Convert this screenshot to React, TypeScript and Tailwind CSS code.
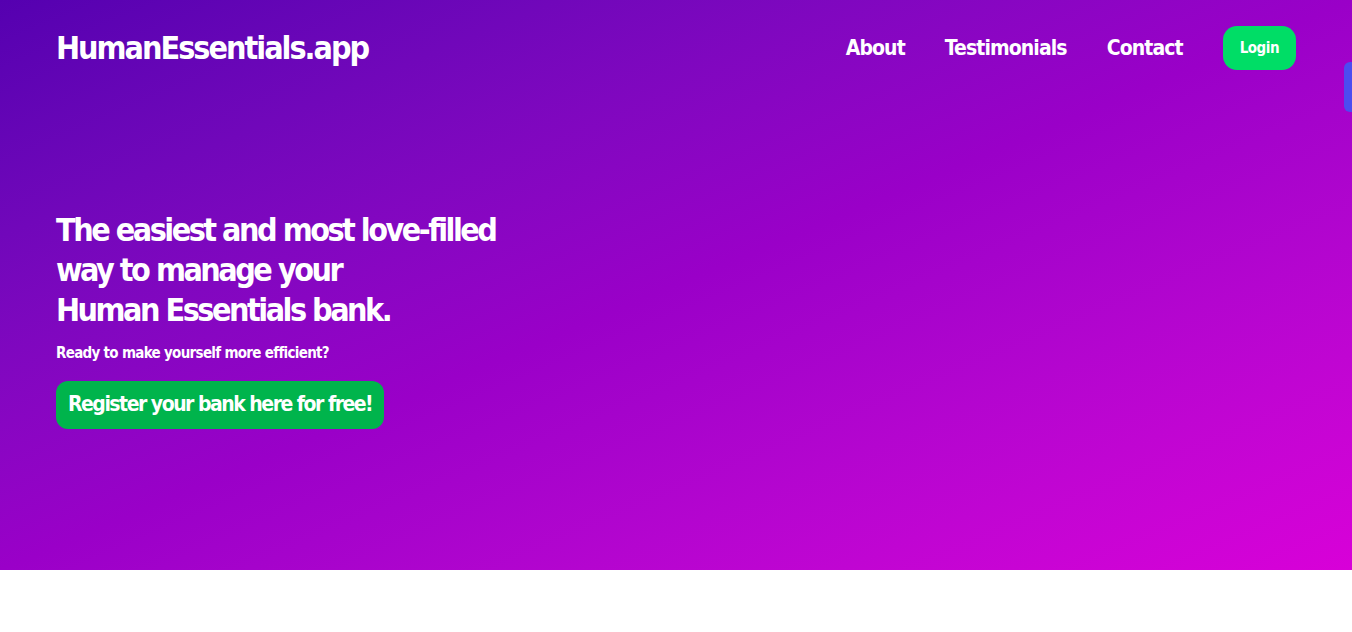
import React from 'react';

const font = { fontFamily: '"DejaVu Sans Condensed", "DejaVu Sans", sans-serif' };

export default function App() {
  return (
    <div className="min-h-screen w-full bg-white" style={font}>
      <header className="relative h-[570px] w-full bg-linear-to-br from-[#5500b0] via-[#9a00c8] to-[#d800d8] text-white">
        <nav className="flex items-center justify-between pl-14 pr-14 pt-[26px]">
          <span className="text-[32px] font-bold tracking-[-2px] leading-none">HumanEssentials.app</span>
          <div className="flex items-center gap-10 pt-0.5">
            <a href="#about" className="text-[21px] font-bold tracking-[-0.9px]">About</a>
            <a href="#testimonials" className="text-[21px] font-bold tracking-[-0.9px]">Testimonials</a>
            <a href="#contact" className="text-[21px] font-bold tracking-[-0.9px]">Contact</a>
            <button className="-mt-0.5 h-11 rounded-[14px] bg-[#00dd66] px-[17px] text-[15px] font-bold tracking-[-0.5px]">Login</button>
          </div>
        </nav>

        <section className="pl-14 pt-[140px]">
          <h1 className="text-[32px] font-bold leading-[40px] tracking-[-2.5px]">
            The easiest and most love-filled
            <br />
            way to manage your
            <br />
            Human Essentials bank.
          </h1>
          <p className="mt-3 text-[15px] font-bold tracking-[-0.7px]">Ready to make yourself more efficient?</p>
          <button className="mt-4 h-12 rounded-[12px] bg-[#00b44c] px-3 text-[21px] font-bold tracking-[-1.5px]">
            Register your bank here for free!
          </button>
        </section>

        <div className="absolute right-0 top-[62px] h-[50px] w-2 rounded-l-md bg-[#4c4cf0]" />
      </header>
    </div>
  );
}
